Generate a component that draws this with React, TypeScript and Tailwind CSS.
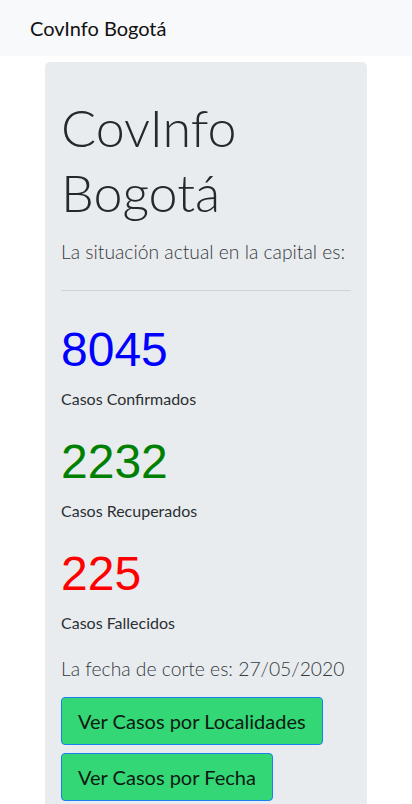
export default function App() {
  const stats = [
    { value: "8045", label: "Casos Confirmados", color: "text-[#0000ff]" },
    { value: "2232", label: "Casos Recuperados", color: "text-[#008000]" },
    { value: "225", label: "Casos Fallecidos", color: "text-[#ff0000]" },
  ]

  return (
    <div className="min-h-screen bg-white text-[#212529] font-['Lato',sans-serif]">
      {/* Navbar */}
      <nav className="h-[56px] bg-[#f8f9fa] px-[30px] flex items-center">
        <span className="text-[20px] leading-none text-[#111]">CovInfo Bogotá</span>
      </nav>

      <div className="mx-[45px] mt-[6px]">
        <div className="rounded-[5px] bg-[#e9ecef] px-4 pt-[33px] pb-12">
          <h1 className="text-[52px] font-light leading-[65px] text-[#25282c]">CovInfo Bogotá</h1>
          <p className="mt-3 text-[19.3px] font-light leading-[30px] text-[#343a40] whitespace-nowrap">
            La situación actual en la capital es:
          </p>
          <hr className="mt-[23px] mb-[30px] border-t border-[#cfd3d7]" />

          {stats.map((s) => (
            <div key={s.value} className="mb-[22px]">
              <div className={`font-['Liberation_Sans',Arial,sans-serif] text-[48px] leading-[58px] ${s.color}`}>
                {s.value}
              </div>
              <p className="mt-2 text-[16px] leading-6 text-[#2b2f33]">{s.label}</p>
            </div>
          ))}

          <p className="-mt-[3px] text-[19.3px] font-light leading-[30px] text-[#343a40] whitespace-nowrap">
            La fecha de corte es: 27/05/2020
          </p>

          <div className="mt-[13px] flex flex-col items-start gap-2">
            <button className="rounded-[4px] border border-[#1a7ff5] bg-[#33d775] px-4 h-[48px] text-[20px] text-[#0d1a12]">
              Ver Casos por Localidades
            </button>
            <button className="rounded-[4px] border border-[#1a7ff5] bg-[#33d775] px-4 h-[48px] text-[20px] text-[#0d1a12]">
              Ver Casos por Fecha
            </button>
          </div>
        </div>
      </div>
    </div>
  )
}
